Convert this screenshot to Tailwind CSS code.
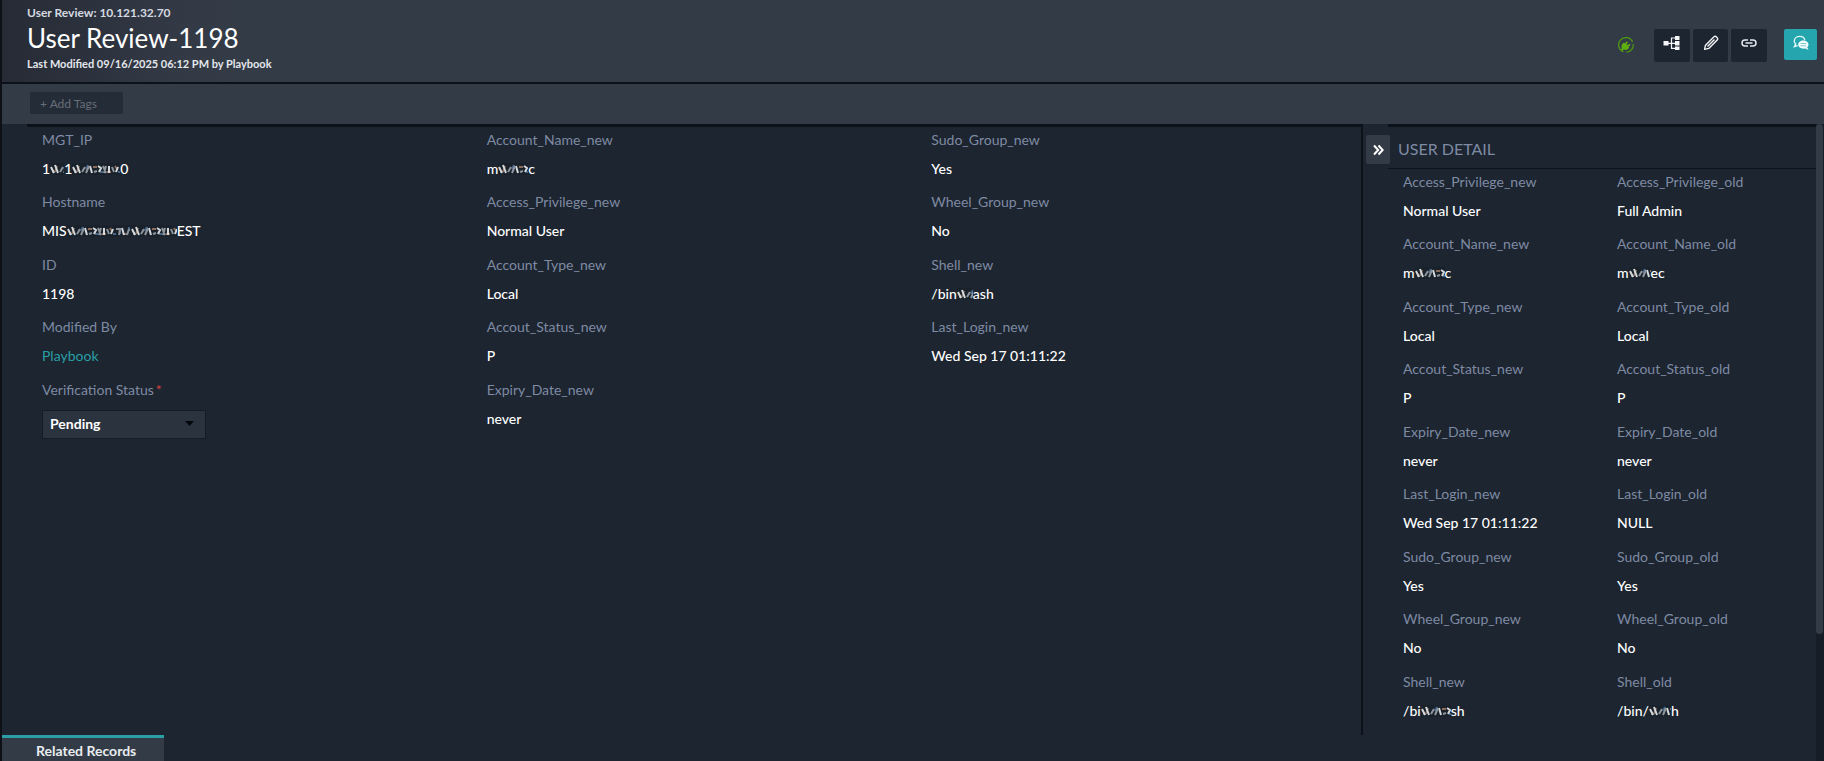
<!DOCTYPE html>
<html lang="en">
<head>
    <meta charset="UTF-8">
    <meta name="viewport" content="width=device-width, initial-scale=1.0">
    <title>User Review-1198</title>
    <script src="https://cdn.jsdelivr.net/npm/@tailwindcss/browser@4"></script>
</head>
<body class="h-screen overflow-hidden bg-[#1c2530] font-[Lato,sans-serif] text-[14px] text-white">
    <!-- Shared pattern for masked values -->
    <svg class="absolute size-0" aria-hidden="true">
        <defs>
            <pattern id="mask" width="64" height="12" patternUnits="userSpaceOnUse">
                <rect width="64" height="12" fill="#19212b"/>
                <path d="M2 9h3M16 2l-2 4M28 9h3M46 9h3M53 3v6M62 2v4" stroke="#42658a" stroke-width="2" fill="none"/>
                <path d="M7 3l-2 6M21 4h4M35 9h4M43 3l2 3M57 9h4" stroke="#8a6d5a" stroke-width="2" fill="none"/>
                <path d="M1 4l3 6M5 2l3 8M18 3l2 7M26 3l3 2-2 4M37 3v7M44 9l2-5M55 3l2 7" stroke="#d5d9dc" stroke-width="2" fill="none"/>
                <path d="M10 9l3-5M14 10l3-7M22 9l3-1M31 3l3 7M34 3l-2 7M40 4l2 5M49 4h4l-1 6M60 10l2-6" stroke="#8d949c" stroke-width="2" fill="none"/>
            </pattern>
        </defs>
    </svg>

    <div class="flex h-full flex-col border-l-2 border-[#0d1117]">
        <header class="flex items-center justify-between border-b-2 border-[#0b1219] bg-[#333c46] bg-linear-to-r from-[#262b35] via-[#333a46] via-10% to-[#333c46] to-16% pr-[7px] pl-[25px]">
            <div class="pt-1 pb-2">
                <p class="text-[12px] leading-[18px] font-bold text-[#d5d9e0]">User Review: 10.121.32.70</p>
                <h1 class="text-[26px] leading-[32px]">User Review-1198</h1>
                <p class="text-[11px] leading-[20px] font-bold text-[#e4e7ec]">Last Modified 09/16/2025 06:12 PM by Playbook</p>
            </div>
            <div class="flex items-start gap-[3px] pt-2">
                <svg class="mt-2 mr-[17px] size-4" viewBox="0 0 16 16" fill="none" role="img" aria-label="Connected">
                    <path d="M5.500 14.800A7.300 7.300 0 1 1 14.600 5M15.200 7a7.300 7.300 0 0 1-6.800 8.200" stroke="#4f9a0c" stroke-width="1.200"/>
                    <path d="M2.800 12.800l1.200-1.500c-1-2-.6-3.700.8-4.900l1.200-1 1 1 1.700-2.200 1.200 1-1.300 2 1 .8 2-1.300.9 1.200-2 1.500.7.900c-.6 2.200-3 3.300-5.200 2.300l-1.700 1z" fill="#5fae10"/>
                </svg>
                <button type="button" aria-label="Correlations" class="flex h-[33px] w-9 items-center justify-center rounded-xs bg-[#1c2530] pb-1">
                    <svg class="h-4 w-[18px]" viewBox="0 0 18 16" fill="#f4f6f8">
                        <path d="M.5 6h5v4.500h-5zM12 1h4.500v4H12zM12 6h4.500v4.500H12zM12 11.500h4.500V15H12z"/>
                        <path d="M5 8.300h7M12 3H8.500v10.300H12" fill="none" stroke="#f4f6f8" stroke-width="1.200"/>
                    </svg>
                </button>
                <button type="button" aria-label="Edit" class="flex h-[33px] w-[35px] items-center justify-center rounded-xs bg-[#1c2530] pb-1">
                    <svg class="size-4" viewBox="0 0 16 16" fill="none" stroke="#f4f6f8" stroke-width="1.400" stroke-linejoin="round">
                        <path d="M1.600 14.400l.9-4.200L11 1.700a1.500 1.500 0 0 1 2.200 0l1 1a1.500 1.500 0 0 1 0 2.200l-8.400 8.500zM4.500 11.500l7-7"/>
                    </svg>
                </button>
                <button type="button" aria-label="Copy link" class="flex h-[33px] w-9 items-center justify-center rounded-xs bg-[#1c2530] pb-1">
                    <svg class="h-2 w-4" viewBox="0 0 16 8" fill="none" stroke="#e4e7ee" stroke-width="1.500">
                        <path d="M7 1H4a3 3 0 0 0 0 6h3M9 1h3a3 3 0 0 1 0 6H9M4.500 4h7"/>
                    </svg>
                </button>
                <button type="button" aria-label="Comments" class="ml-[14px] flex h-[31px] w-[33px] items-center justify-center rounded-xs bg-[#25a5ae] pb-0.5">
                    <svg class="size-4" viewBox="0 0 16 16" fill="none">
                        <path d="M11.800 5.200C11.400 3 9.300 1.400 6.700 1.400 3.700 1.400 1.300 3.400 1.300 6c0 1.300.5 2.300 1.400 3.100L1.400 11.700l3.300-1" stroke="#e2f7f8" stroke-width="1.400"/>
                        <path d="M10.300 5.500c3 0 5.200 1.800 5.200 4.100 0 1.100-.5 2.100-1.300 2.800l1.400 2.700-3.400-1.500c-3.800.7-7-1.200-7-4 0-2.300 2.200-4.100 5.100-4.100z" fill="#f2fcfc"/>
                        <path d="M7.500 8.500h5.600M7.500 10.800h5.600" stroke="#7fcbd0"/>
                    </svg>
                </button>
            </div>
        </header>

        <div class="bg-[#333c46] pt-2 pb-2.5 pl-7">
            <input type="text" aria-label="Add tags" placeholder="+ Add Tags" class="block h-[22px] w-[93px] rounded-xs bg-[#242c37] px-2.5 text-[12px] outline-none placeholder:text-[#676e79]">
        </div>

        <div class="flex min-h-0 flex-1">
            <div class="flex min-w-0 flex-1 flex-col">
                <div class="flex min-h-0 flex-1">
                    <main class="ml-[25px] flex flex-1 border-t-3 border-[#0b1219] pb-[46px]">
                        <div class="grid flex-1 grid-cols-3">
                            <dl class="grid grid-rows-9 pl-[15px]">
                                <div>
                                    <dt class="leading-[26px] text-[#7f8aa3]">MGT_IP</dt>
                                    <dd class="flex items-center pt-0.5 leading-[28px] font-medium">1<svg class="h-3 w-[14px]" aria-hidden="true"><rect width="100%" height="12" fill="url(#mask)"/></svg>1<svg class="h-3 w-12" aria-hidden="true"><rect width="100%" height="12" fill="url(#mask)"/></svg>0</dd>
                                </div>
                                <div>
                                    <dt class="leading-[26px] text-[#7f8aa3]">Hostname</dt>
                                    <dd class="flex items-center pt-0.5 leading-[28px] font-medium">MIS<svg class="h-3 w-[110px]" aria-hidden="true"><rect width="100%" height="12" fill="url(#mask)"/></svg>EST</dd>
                                </div>
                                <div>
                                    <dt class="leading-[26px] text-[#7f8aa3]">ID</dt>
                                    <dd class="pt-0.5 leading-[28px] font-medium">1198</dd>
                                </div>
                                <div>
                                    <dt class="leading-[26px] text-[#7f8aa3]">Modified By</dt>
                                    <dd class="pt-0.5 leading-[28px]"><a href="#" class="text-[#2a9fa6]">Playbook</a></dd>
                                </div>
                                <div>
                                    <dt class="leading-[26px] text-[#7f8aa3]"><label for="status">Verification Status<span class="ml-0.5 text-[#d9413d]">*</span></label></dt>
                                    <dd class="relative mt-[7px] w-[164px]">
                                        <select id="status" class="block h-[29px] w-full appearance-none border border-[#151c25] bg-[#2b343e] px-[7px] pb-0.5 font-bold outline-none">
                                            <option>Pending</option>
                                            <option>Verified</option>
                                        </select>
                                        <svg class="pointer-events-none absolute top-[11px] right-3 h-[5px] w-[9px]" viewBox="0 0 9 5" aria-hidden="true"><path d="M0 0h9L4.500 5z" fill="#05080b"/></svg>
                                    </dd>
                                </div>
                            </dl>
                            <dl class="grid grid-rows-9 pl-[15px]">
                                <div>
                                    <dt class="leading-[26px] text-[#7f8aa3]">Account_Name_new</dt>
                                    <dd class="flex items-center pt-0.5 leading-[28px] font-medium">m<svg class="h-3 w-[30px]" aria-hidden="true"><rect width="100%" height="12" fill="url(#mask)"/></svg>c</dd>
                                </div>
                                <div>
                                    <dt class="leading-[26px] text-[#7f8aa3]">Access_Privilege_new</dt>
                                    <dd class="pt-0.5 leading-[28px] font-medium">Normal User</dd>
                                </div>
                                <div>
                                    <dt class="leading-[26px] text-[#7f8aa3]">Account_Type_new</dt>
                                    <dd class="pt-0.5 leading-[28px] font-medium">Local</dd>
                                </div>
                                <div>
                                    <dt class="leading-[26px] text-[#7f8aa3]">Accout_Status_new</dt>
                                    <dd class="pt-0.5 leading-[28px] font-medium">P</dd>
                                </div>
                                <div>
                                    <dt class="leading-[26px] text-[#7f8aa3]">Expiry_Date_new</dt>
                                    <dd class="pt-0.5 leading-[28px] font-medium">never</dd>
                                </div>
                            </dl>
                            <dl class="grid grid-rows-9 pl-[15px]">
                                <div>
                                    <dt class="leading-[26px] text-[#7f8aa3]">Sudo_Group_new</dt>
                                    <dd class="pt-0.5 leading-[28px] font-medium">Yes</dd>
                                </div>
                                <div>
                                    <dt class="leading-[26px] text-[#7f8aa3]">Wheel_Group_new</dt>
                                    <dd class="pt-0.5 leading-[28px] font-medium">No</dd>
                                </div>
                                <div>
                                    <dt class="leading-[26px] text-[#7f8aa3]">Shell_new</dt>
                                    <dd class="flex items-center pt-0.5 leading-[28px] font-medium">/bin<svg class="h-3 w-4" aria-hidden="true"><rect width="100%" height="12" fill="url(#mask)"/></svg>ash</dd>
                                </div>
                                <div>
                                    <dt class="leading-[26px] text-[#7f8aa3]">Last_Login_new</dt>
                                    <dd class="pt-0.5 leading-[28px] font-medium">Wed Sep 17 01:11:22</dd>
                                </div>
                            </dl>
                        </div>
                    </main>

                    <aside class="flex w-[455px] flex-col border-l-2 border-[#0b1219] pb-1">
                        <div class="flex">
                            <button type="button" aria-label="Collapse panel" class="mt-[11px] -mr-0.5 ml-[3px] flex h-[29px] w-6 items-center justify-center rounded-xs bg-[#333c46]">
                                <svg class="h-3 w-[11px]" viewBox="0 0 11 12" fill="none" stroke="#fff" stroke-width="2"><path d="M1 1.500L5.200 6 1 10.500M5.500 1.500L9.700 6l-4.200 4.500"/></svg>
                            </button>
                            <h2 class="h-[45px] flex-1 border-t-3 border-b border-[#0b1219] pl-2.5 text-[16px] leading-[44px] text-[#7f8aa3]">USER DETAIL</h2>
                        </div>
                        <dl class="ml-[25px] grid flex-1 grid-cols-2 grid-rows-9 *:pl-[15px]">
                            <div>
                                <dt class="leading-[26px] text-[#7f8aa3]">Access_Privilege_new</dt>
                                <dd class="pt-0.5 leading-[28px] font-medium">Normal User</dd>
                            </div>
                            <div>
                                <dt class="leading-[26px] text-[#7f8aa3]">Access_Privilege_old</dt>
                                <dd class="pt-0.5 leading-[28px] font-medium">Full Admin</dd>
                            </div>
                            <div>
                                <dt class="leading-[26px] text-[#7f8aa3]">Account_Name_new</dt>
                                <dd class="flex items-center pt-0.5 leading-[28px] font-medium">m<svg class="h-3 w-[30px]" aria-hidden="true"><rect width="100%" height="12" fill="url(#mask)"/></svg>c</dd>
                            </div>
                            <div>
                                <dt class="leading-[26px] text-[#7f8aa3]">Account_Name_old</dt>
                                <dd class="flex items-center pt-0.5 leading-[28px] font-medium">m<svg class="h-3 w-[22px]" aria-hidden="true"><rect width="100%" height="12" fill="url(#mask)"/></svg>ec</dd>
                            </div>
                            <div>
                                <dt class="leading-[26px] text-[#7f8aa3]">Account_Type_new</dt>
                                <dd class="pt-0.5 leading-[28px] font-medium">Local</dd>
                            </div>
                            <div>
                                <dt class="leading-[26px] text-[#7f8aa3]">Account_Type_old</dt>
                                <dd class="pt-0.5 leading-[28px] font-medium">Local</dd>
                            </div>
                            <div>
                                <dt class="leading-[26px] text-[#7f8aa3]">Accout_Status_new</dt>
                                <dd class="pt-0.5 leading-[28px] font-medium">P</dd>
                            </div>
                            <div>
                                <dt class="leading-[26px] text-[#7f8aa3]">Accout_Status_old</dt>
                                <dd class="pt-0.5 leading-[28px] font-medium">P</dd>
                            </div>
                            <div>
                                <dt class="leading-[26px] text-[#7f8aa3]">Expiry_Date_new</dt>
                                <dd class="pt-0.5 leading-[28px] font-medium">never</dd>
                            </div>
                            <div>
                                <dt class="leading-[26px] text-[#7f8aa3]">Expiry_Date_old</dt>
                                <dd class="pt-0.5 leading-[28px] font-medium">never</dd>
                            </div>
                            <div>
                                <dt class="leading-[26px] text-[#7f8aa3]">Last_Login_new</dt>
                                <dd class="pt-0.5 leading-[28px] font-medium">Wed Sep 17 01:11:22</dd>
                            </div>
                            <div>
                                <dt class="leading-[26px] text-[#7f8aa3]">Last_Login_old</dt>
                                <dd class="pt-0.5 leading-[28px] font-medium">NULL</dd>
                            </div>
                            <div>
                                <dt class="leading-[26px] text-[#7f8aa3]">Sudo_Group_new</dt>
                                <dd class="pt-0.5 leading-[28px] font-medium">Yes</dd>
                            </div>
                            <div>
                                <dt class="leading-[26px] text-[#7f8aa3]">Sudo_Group_old</dt>
                                <dd class="pt-0.5 leading-[28px] font-medium">Yes</dd>
                            </div>
                            <div>
                                <dt class="leading-[26px] text-[#7f8aa3]">Wheel_Group_new</dt>
                                <dd class="pt-0.5 leading-[28px] font-medium">No</dd>
                            </div>
                            <div>
                                <dt class="leading-[26px] text-[#7f8aa3]">Wheel_Group_old</dt>
                                <dd class="pt-0.5 leading-[28px] font-medium">No</dd>
                            </div>
                            <div>
                                <dt class="leading-[26px] text-[#7f8aa3]">Shell_new</dt>
                                <dd class="flex items-center pt-0.5 leading-[28px] font-medium">/bi<svg class="h-3 w-[30px]" aria-hidden="true"><rect width="100%" height="12" fill="url(#mask)"/></svg>sh</dd>
                            </div>
                            <div>
                                <dt class="leading-[26px] text-[#7f8aa3]">Shell_old</dt>
                                <dd class="flex items-center pt-0.5 leading-[28px] font-medium">/bin/<svg class="h-3 w-[22px]" aria-hidden="true"><rect width="100%" height="12" fill="url(#mask)"/></svg>h</dd>
                            </div>
                        </dl>
                    </aside>
                </div>

                <nav class="flex">
                    <a href="#" class="h-[26px] w-[162px] border-t-3 border-[#2a9fa6] bg-[#333c46] pl-[34px] text-[14px] leading-[26px] font-bold text-[#e9ecf0]">Related Records</a>
                </nav>
            </div>

            <!-- Scrollbar -->
            <div class="w-2 bg-[#161d26] pr-px">
                <div class="h-4/5 rounded-full bg-[#333c46]"></div>
            </div>
        </div>
    </div>
</body>
</html>
